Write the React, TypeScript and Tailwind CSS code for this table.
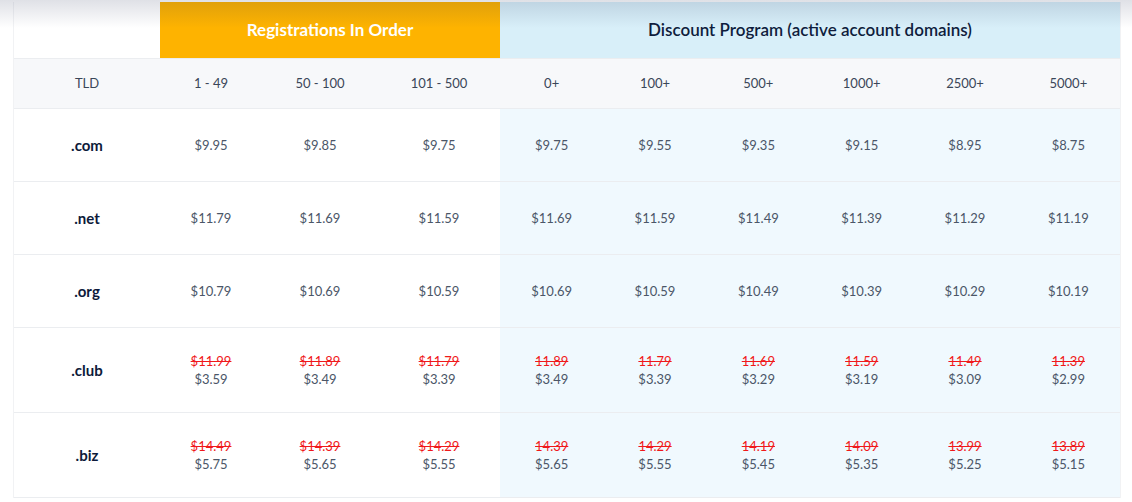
import React from "react";

const tiers = ["1 - 49", "50 - 100", "101 - 500", "0+", "100+", "500+", "1000+", "2500+", "5000+"];

type Row = { tld: string; prices: string[]; old?: string[] };

const rows: Row[] = [
    { tld: ".com", prices: ["9.95", "9.85", "9.75", "9.75", "9.55", "9.35", "9.15", "8.95", "8.75"] },
    { tld: ".net", prices: ["11.79", "11.69", "11.59", "11.69", "11.59", "11.49", "11.39", "11.29", "11.19"] },
    { tld: ".org", prices: ["10.79", "10.69", "10.59", "10.69", "10.59", "10.49", "10.39", "10.29", "10.19"] },
    {
        tld: ".club",
        prices: ["3.59", "3.49", "3.39", "3.49", "3.39", "3.29", "3.19", "3.09", "2.99"],
        old: ["$11.99", "$11.89", "$11.79", "11.89", "11.79", "11.69", "11.59", "11.49", "11.39"],
    },
    {
        tld: ".biz",
        prices: ["5.75", "5.65", "5.55", "5.65", "5.55", "5.45", "5.35", "5.25", "5.15"],
        old: ["$14.49", "$14.39", "$14.29", "14.39", "14.29", "14.19", "14.09", "13.99", "13.89"],
    },
];

const cols = "grid grid-cols-[146px_102px_116px_122px_repeat(6,1fr)]";

export default function App() {
    return (
        <div className="relative w-[1132px] h-[502px] bg-white overflow-hidden font-['Lato','Noto_Sans',sans-serif]">
            {/* top shadow from the header above */}
            <div className="pointer-events-none absolute inset-x-0 top-0 h-7 bg-gradient-to-b from-[rgba(30,40,80,0.14)] to-transparent z-10" />

            <div className="ml-[13px] mt-[2px] w-[1108px] border-x border-[#f1f2f4]">
                {/* group headers */}
                <div className={`${cols} h-[56px]`}>
                    <div className="bg-white" />
                    <div className="col-span-3 bg-[#feb300] flex items-center justify-center text-white font-bold text-[17px]">
                        Registrations In Order
                    </div>
                    <div className="col-span-6 bg-[#d8eff9] flex items-center justify-center text-[#0f1d3d] font-semibold text-[17px]">
                        Discount Program (active account domains)
                    </div>
                </div>

                {/* tier headers */}
                <div className={`${cols} h-[51px] bg-[#f7f8fa] border-y border-[#ebedf0] text-[13px] text-[#3a4658]`}>
                    <div className="flex items-center justify-center">TLD</div>
                    {tiers.map((t) => (
                        <div key={t} className="flex items-center justify-center">{t}</div>
                    ))}
                </div>

                {rows.map((r) => (
                    <div
                        key={r.tld}
                        className={`${cols} ${r.old ? "h-[85px]" : "h-[73px]"} border-b border-[#ebedf0]`}
                    >
                        <div className="flex items-center justify-center text-[15px] font-bold text-[#0d1a3a]">{r.tld}</div>
                        {r.prices.map((p, i) => (
                            <div
                                key={i}
                                className={`flex flex-col items-center justify-center text-[13px] leading-[18px] text-[#4b5668] ${i > 2 ? "bg-[#f0f9fe]" : "bg-white"}`}
                            >
                                {r.old && <span className="text-[#f0191b] line-through">{r.old[i]}</span>}
                                <span>${p}</span>
                            </div>
                        ))}
                    </div>
                ))}
            </div>
        </div>
    );
}
